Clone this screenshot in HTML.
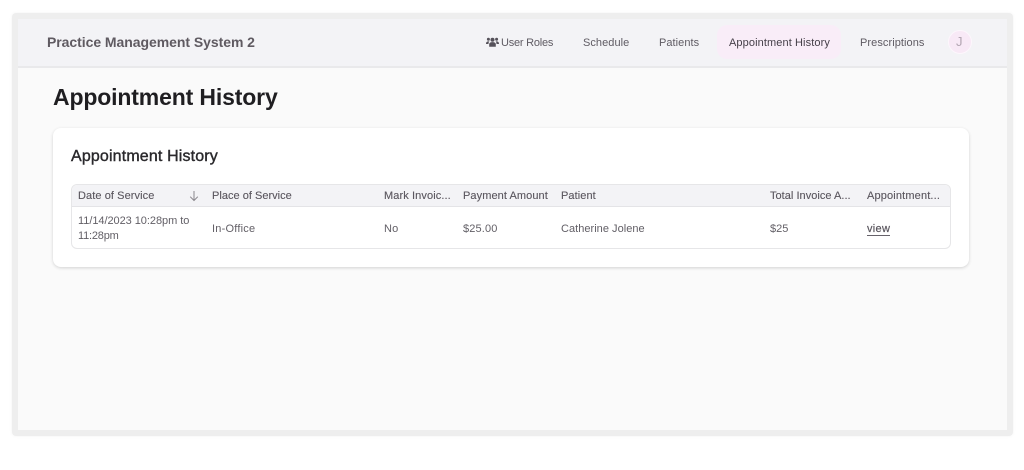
<!DOCTYPE html>
<html lang="en">
<head>
<meta charset="utf-8">
<title>Appointment History</title>
<style>
html,body{margin:0;padding:0;background:#fff;}
body{width:1024px;height:470px;overflow:hidden;position:relative;font-family:"Liberation Sans",sans-serif;filter:blur(.3px);}
#frame{position:absolute;left:12px;top:13px;width:1001px;height:423px;background:#eeeeee;border-radius:4px;box-shadow:0 0 3px rgba(0,0,0,.05);}
#app{position:absolute;left:18px;top:19px;width:989px;height:411px;background:#fafafa;overflow:hidden;}
#nav{position:absolute;left:18px;top:19px;width:989px;height:47px;background:#f3f3f6;border-bottom:2px solid #e9e9eb;}
#pill{position:absolute;left:717px;top:25px;width:124px;height:34px;background:#f9edf8;border-radius:10px;}
#av{position:absolute;left:948px;top:30px;width:24px;height:24px;box-sizing:border-box;background:#f8e9f6;border:1px solid #fdf6fc;border-radius:50%;}
#card{position:absolute;left:53px;top:128px;width:916px;height:139px;background:#fff;border-radius:8px;box-shadow:0 1px 3px rgba(0,0,0,.16);}
#tbl{position:absolute;left:71px;top:184px;width:880px;height:65px;box-sizing:border-box;border:1px solid #e6e6e8;border-radius:6px;overflow:hidden;background:#fff;}
#th{position:absolute;left:0;top:0;width:100%;height:21px;background:#f3f3f6;border-bottom:1px solid #e4e4e7;}
.t{position:absolute;white-space:nowrap;line-height:14px;font-size:11px;color:#5f5b63;transform-origin:0 50%;}
.h{color:#5a565e;-webkit-text-stroke:.12px #5a565e;}
.c{color:#625f66;}
a.t{text-decoration:none;color:#5a565e;border-bottom:1px solid #66626a;line-height:12px;}
svg{position:absolute;}
</style>
</head>
<body>
<div id="frame"></div>
<div id="app"></div>
<div id="nav"></div>
<div id="pill"></div>
<div id="av"></div>

<div class="t" style="left:47px;top:35px;font-size:14px;font-weight:700;color:#5f5a61;letter-spacing:-.05px">Practice Management System 2</div>

<svg style="left:486px;top:37px" width="13" height="10" viewBox="0 0 13 10"><g fill="#55515a"><circle cx="6.5" cy="2.8" r="2"/><circle cx="2.4" cy="2.2" r="1.5"/><circle cx="10.6" cy="2.200" r="1.500"/><path d="M3.2 9.800V7.200C3.200 5.800 4.600 5.100 6.500 5.100S9.800 5.800 9.800 7.200V9.800Z"/><path d="M0 7C0 4.900 1.200 4.200 3.400 4.500 2.800 5 2.500 5.900 2.500 7Z"/><path d="M13 7C13 4.900 11.800 4.200 9.600 4.500 10.200 5 10.500 5.900 10.500 7Z"/></g></svg>
<div class="t" style="left:501px;top:36px;letter-spacing:-.22px">User Roles</div>
<div class="t" style="left:583px;top:36px;letter-spacing:.05px">Schedule</div>
<div class="t" style="left:659px;top:36px;letter-spacing:.05px">Patients</div>
<div class="t" style="left:729px;top:36px;letter-spacing:.1px;color:#453f48">Appointment History</div>
<div class="t" style="left:860px;top:36px;letter-spacing:.07px">Prescriptions</div>
<div class="t" style="left:956px;top:35px;font-size:13px;color:#b3a5b2">J</div>

<div class="t" style="left:53px;top:83px;font-size:23px;line-height:28px;font-weight:700;color:#1f1e21;letter-spacing:-.15px">Appointment History</div>

<div id="card"></div>
<div class="t" style="left:71px;top:148px;font-size:16px;line-height:18px;color:#2a292c;-webkit-text-stroke:.4px #2a292c;letter-spacing:.15px">Appointment History</div>

<div id="tbl"><div id="th"></div></div>

<div class="t h" style="left:78px;top:189px;letter-spacing:.08px">Date of Service</div>
<svg style="left:189px;top:190px" width="10" height="12" viewBox="0 0 10 12"><path d="M5 1V10.500M1.200 6.700 5 10.500 8.800 6.700" fill="none" stroke="#8b888e" stroke-width="1"/></svg>
<div class="t h" style="left:212px;top:189px;letter-spacing:.02px">Place of Service</div>
<div class="t h" style="left:384px;top:189px;letter-spacing:.1px">Mark Invoic...</div>
<div class="t h" style="left:463px;top:189px;letter-spacing:.08px">Payment Amount</div>
<div class="t h" style="left:561px;top:189px;letter-spacing:.08px">Patient</div>
<div class="t h" style="left:770px;top:189px;letter-spacing:.03px">Total Invoice A...</div>
<div class="t h" style="left:867px;top:189px;letter-spacing:.15px">Appointment...</div>

<div class="t c" style="left:78px;top:214px;letter-spacing:-.05px">11/14/2023 10:28pm to</div>
<div class="t c" style="left:78px;top:229px;letter-spacing:-.2px">11:28pm</div>
<div class="t c" style="left:212px;top:222px;letter-spacing:.22px">In-Office</div>
<div class="t c" style="left:384px;top:222px;letter-spacing:.2px">No</div>
<div class="t c" style="left:463px;top:222px;letter-spacing:.15px">$25.00</div>
<div class="t c" style="left:561px;top:222px;letter-spacing:.03px">Catherine Jolene</div>
<div class="t c" style="left:770px;top:222px;letter-spacing:0">$25</div>
<a class="t" style="left:867px;top:222.500px;letter-spacing:.3px;-webkit-text-stroke:.2px #5a565e">view</a>
</body>
</html>
